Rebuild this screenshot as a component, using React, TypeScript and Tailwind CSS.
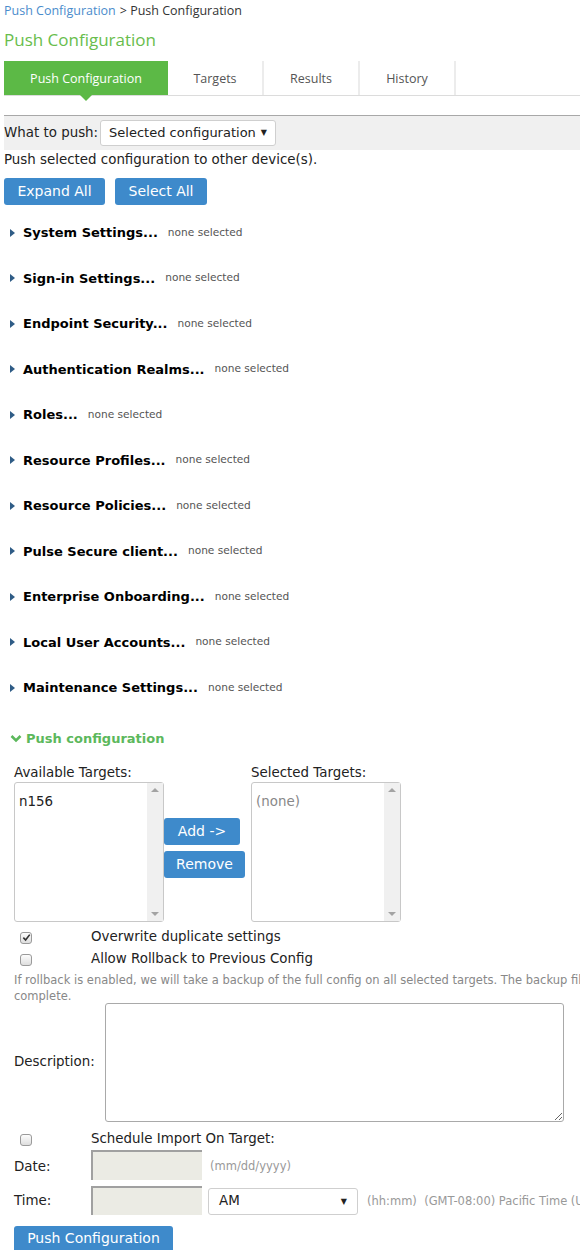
import React from 'react';

const sections = [
    'System Settings...',
    'Sign-in Settings...',
    'Endpoint Security...',
    'Authentication Realms...',
    'Roles...',
    'Resource Profiles...',
    'Resource Policies...',
    'Pulse Secure client...',
    'Enterprise Onboarding...',
    'Local User Accounts...',
    'Maintenance Settings...',
];

const tabs = ['Targets', 'Results', 'History'];

const Checkbox: React.FC<{ checked?: boolean }> = ({ checked }) => (
    <span className="w-[12px] h-[12px] rounded-[3px] border border-[#9a9a9a] bg-gradient-to-b from-[#fdfdfd] to-[#dedede] flex items-center justify-center">
        {checked && (
            <svg width="9" height="9" viewBox="0 0 10 10">
                <path d="M1.5 5.2 L4 7.8 L8.6 1.8" fill="none" stroke="#333" strokeWidth="1.8" />
            </svg>
        )}
    </span>
);

const ListBox: React.FC<{ children?: React.ReactNode }> = ({ children }) => (
    <div className="w-[150px] h-[140px] border border-[#c8c8c8] rounded-[3px] bg-white flex">
        <div className="flex-1 px-[4px] pt-[9px] text-[13.4px]">{children}</div>
        <div className="w-[16px] bg-[#f0f0f0] flex flex-col justify-between items-center py-[5px]">
            <span className="w-0 h-0 border-x-[4px] border-x-transparent border-b-[4px] border-b-[#a3a3a3]" />
            <span className="w-0 h-0 border-x-[4px] border-x-transparent border-t-[4px] border-t-[#a3a3a3]" />
        </div>
    </div>
);

export default function App() {
    return (
        <div className="w-[580px] h-[1250px] overflow-hidden bg-white text-[#222] font-['DejaVu_Sans',sans-serif]">
            {/* Breadcrumb */}
            <div className="pl-[4px] pt-[1px] h-[21px] text-[12.5px] font-['Open_Sans',sans-serif] flex items-center gap-[4px]">
                <span className="text-[#4a8ccc]">Push Configuration</span>
                <span className="text-[#333]">&gt; Push Configuration</span>
            </div>

            {/* Title */}
            <div className="pl-[4px] h-[38px] flex items-center text-[17px] text-[#68bd4c] font-['Open_Sans',sans-serif]">
                Push Configuration
            </div>

            {/* Tabs */}
            <div className="ml-[4px] mt-[2px] flex border-b border-[#dcdcdc] h-[35px] font-['Open_Sans',sans-serif] text-[12.5px]">
                <div className="relative w-[164px] bg-[#5cb946] text-white flex items-center justify-center pt-[2px]">
                    Push Configuration
                    <span className="absolute left-[76px] -bottom-[6px] w-0 h-0 border-x-[6px] border-x-transparent border-t-[6px] border-t-[#5cb946]" />
                </div>
                {tabs.map((t) => (
                    <div key={t} className="w-[96px] border-r-2 border-[#ececec] flex items-center justify-center text-[#555] pt-[2px]">
                        {t}
                    </div>
                ))}
            </div>

            {/* What to push bar */}
            <div className="ml-[4px] mt-[19px] border-t border-[#a8a8a8] bg-[#f0f0f0] h-[35px] flex items-center text-[13.4px]">
                <span>What to push:</span>
                <div className="ml-[2px] w-[176px] h-[26px] bg-white border border-[#cfcfcf] rounded-[3px] flex items-center pl-[8px] gap-[5px] text-[13px]">
                    <span>Selected configuration</span>
                    <span className="text-[8px]">▼</span>
                </div>
            </div>

            <div className="pl-[4px] mt-[1px] h-[18px] flex items-center text-[13.4px]">
                Push selected configuration to other device(s).
            </div>

            {/* Expand / Select */}
            <div className="pl-[4px] pt-[9px] flex gap-[10px]">
                <button className="w-[101px] h-[27px] bg-[#3e8acb] text-white rounded-[3px] text-[14px]">Expand All</button>
                <button className="w-[92px] h-[27px] bg-[#3e8acb] text-white rounded-[3px] text-[14px]">Select All</button>
            </div>

            {/* Sections */}
            <div className="mt-[5px]">
                {sections.map((s) => (
                    <div key={s} className="h-[45.5px] flex items-center pl-[10px]">
                        <span className="w-0 h-0 border-y-[4.5px] border-y-transparent border-l-[5px] border-l-[#2f5c86] mr-[8px]" />
                        <span className="font-bold text-[13px] text-black">{s}</span>
                        <span className="ml-[10px] text-[10.6px] text-[#555]">none selected</span>
                    </div>
                ))}
            </div>

            {/* Push configuration */}
            <div className="mt-[16px] pl-[10px] flex items-center gap-[4px] text-[#5cb85c] font-bold text-[13px] h-[24px]">
                <svg width="12" height="9" viewBox="0 0 12 9">
                    <path d="M1.5 2 L6 6.5 L10.5 2" fill="none" stroke="#5cb85c" strokeWidth="2.6" />
                </svg>
                Push configuration
            </div>

            <div className="pl-[14px] mt-[12px] text-[13.4px]">
                <div className="flex">
                    <div className="flex flex-col shrink-0">
                        <span className="h-[19px]">Available Targets:</span>
                        <ListBox>n156</ListBox>
                    </div>
                    <div className="flex flex-col gap-[6px] pt-[55px] shrink-0">
                        <button className="w-[76px] h-[27px] bg-[#3e8acb] text-white rounded-[3px] text-[14px]">Add -&gt;</button>
                        <button className="w-[81px] h-[27px] bg-[#3e8acb] text-white rounded-[3px] text-[14px]">Remove</button>
                    </div>
                    <div className="flex flex-col ml-[6px] shrink-0">
                        <span className="h-[19px]">Selected Targets:</span>
                        <ListBox>
                            <span className="text-[#888]">(none)</span>
                        </ListBox>
                    </div>
                </div>

                <div className="mt-[5px] flex items-center h-[22px]">
                    <span className="w-[77px] pl-[6px] shrink-0"><Checkbox checked /></span>
                    <span>Overwrite duplicate settings</span>
                </div>
                <div className="flex items-center h-[22px]">
                    <span className="w-[77px] pl-[6px] shrink-0"><Checkbox /></span>
                    <span>Allow Rollback to Previous Config</span>
                </div>
            </div>

            <div className="pl-[14px] mt-[1px] text-[11.5px] text-[#888] leading-[16px] whitespace-nowrap">
                <div>If rollback is enabled, we will take a backup of the full config on all selected targets. The backup file will be removed once the push is</div>
                <div>complete.</div>
            </div>

            <div className="pl-[14px] text-[13.4px]">
                <div className="-mt-[1px] flex items-center">
                    <span className="w-[91px] shrink-0">Description:</span>
                    <textarea className="w-[459px] h-[119px] shrink-0 border border-[#a9a9a9] rounded-[3px] resize-y" />
                </div>

                <div className="mt-[8px] flex items-center h-[20px]">
                    <span className="w-[77px] pl-[6px] shrink-0"><Checkbox /></span>
                    <span>Schedule Import On Target:</span>
                </div>

                <div className="flex items-center h-[31px]">
                    <span className="w-[77px] shrink-0 pt-[4px]">Date:</span>
                    <div className="w-[111px] h-[30px] shrink-0 bg-[#ebebe4] border-l-2 border-t-2 border-[#a0a0a0]" />
                    <span className="ml-[8px] text-[11.5px] text-[#999] pt-[4px]">(mm/dd/yyyy)</span>
                </div>

                <div className="mt-[5px] flex items-center h-[30px]">
                    <span className="w-[77px] shrink-0 pt-[2px]">Time:</span>
                    <div className="w-[111px] h-[29px] shrink-0 bg-[#ebebe4] border-l-2 border-t-2 border-[#a0a0a0]" />
                    <div className="ml-[6px] mt-[2px] w-[150px] h-[27px] shrink-0 bg-white border border-[#cfcfcf] rounded-[3px] flex items-center justify-between px-[10px]">
                        <span>AM</span>
                        <span className="text-[8px]">▼</span>
                    </div>
                    <span className="ml-[9px] pt-[2px] text-[11.5px] text-[#999] whitespace-nowrap">(hh:mm)&nbsp; (GMT-08:00) Pacific Time (US &amp; Canada)</span>
                </div>

                <button className="mt-[10px] w-[159px] h-[30px] bg-[#3e8acb] text-white rounded-t-[3px] text-[14px] pb-[4px]">Push Configuration</button>
            </div>
        </div>
    );
}
